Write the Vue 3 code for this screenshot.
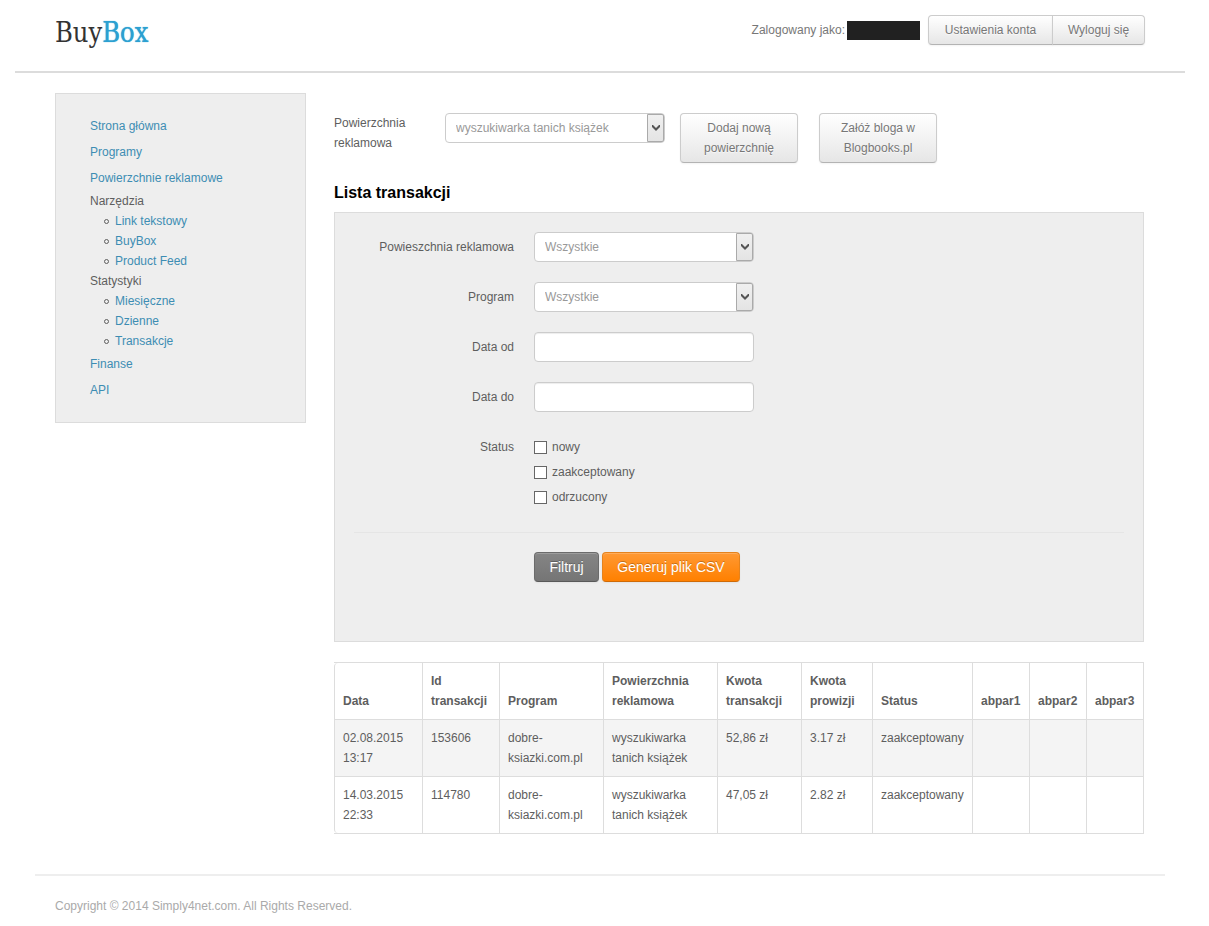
<script setup>
import { ref } from 'vue'

const menu = [
  { label: 'Strona główna' },
  { label: 'Programy' },
  { label: 'Powierzchnie reklamowe' },
  { label: 'Narzędzia', children: ['Link tekstowy', 'BuyBox', 'Product Feed'] },
  { label: 'Statystyki', children: ['Miesięczne', 'Dzienne', 'Transakcje'] },
  { label: 'Finanse' },
  { label: 'API' },
]

const statuses = ['nowy', 'zaakceptowany', 'odrzucony']

const columns = [
  { label: 'Data', cls: 'c-date' },
  { label: 'Id transakcji', cls: 'c-id' },
  { label: 'Program', cls: 'c-program' },
  { label: 'Powierzchnia reklamowa', cls: 'c-surface' },
  { label: 'Kwota transakcji', cls: 'c-amount' },
  { label: 'Kwota prowizji', cls: 'c-fee' },
  { label: 'Status', cls: 'c-status' },
  { label: 'abpar1', cls: 'c-par' },
  { label: 'abpar2', cls: 'c-par' },
  { label: 'abpar3', cls: 'c-par' },
]

const rows = [
  ['02.08.2015 13:17', '153606', 'dobre-ksiazki.com.pl', 'wyszukiwarka tanich książek', '52,86 zł', '3.17 zł', 'zaakceptowany', '', '', ''],
  ['14.03.2015 22:33', '114780', 'dobre-ksiazki.com.pl', 'wyszukiwarka tanich książek', '47,05 zł', '2.82 zł', 'zaakceptowany', '', '', ''],
]

const dateFrom = ref('')
const dateTo = ref('')
const checked = ref([])
</script>

<template>
  <div class="page">
    <header class="header">
      <a class="logo" href="#">Buy<span>Box</span></a>
      <div class="account">
        <span>Zalogowany jako:</span>
        <span class="user"></span>
        <div class="group">
          <button type="button" class="btn settings">Ustawienia konta</button>
          <button type="button" class="btn logout">Wyloguj się</button>
        </div>
      </div>
    </header>

    <div class="body">
      <nav class="sidebar">
        <ul class="menu">
          <li v-for="item in menu" :key="item.label">
            <template v-if="item.children">
              {{ item.label }}
              <ul class="submenu">
                <li v-for="child in item.children" :key="child"><a href="#">{{ child }}</a></li>
              </ul>
            </template>
            <a v-else class="top" href="#">{{ item.label }}</a>
          </li>
        </ul>
      </nav>

      <main class="main">
        <div class="toolbar">
          <label class="toolbar-label" for="surface">Powierzchnia reklamowa</label>
          <div class="select">
            <select id="surface"><option>wyszukiwarka tanich książek</option></select>
            <span class="arrow"><svg width="8" height="6" viewBox="0 0 8 6"><path d="M0 0h1l3 3 3-3h1v2L4 6 0 2z" /></svg></span>
          </div>
          <button type="button" class="btn tall">Dodaj nową powierzchnię</button>
          <button type="button" class="btn tall second">Załóż bloga w Blogbooks.pl</button>
        </div>

        <h1>Lista transakcji</h1>

        <form class="panel" @submit.prevent>
          <div class="row">
            <label for="f-surface">Powieszchnia reklamowa</label>
            <div class="select">
              <select id="f-surface"><option>Wszystkie</option></select>
              <span class="arrow"><svg width="8" height="6" viewBox="0 0 8 6"><path d="M0 0h1l3 3 3-3h1v2L4 6 0 2z" /></svg></span>
            </div>
          </div>
          <div class="row">
            <label for="f-program">Program</label>
            <div class="select">
              <select id="f-program"><option>Wszystkie</option></select>
              <span class="arrow"><svg width="8" height="6" viewBox="0 0 8 6"><path d="M0 0h1l3 3 3-3h1v2L4 6 0 2z" /></svg></span>
            </div>
          </div>
          <div class="row">
            <label for="f-from">Data od</label>
            <input id="f-from" v-model="dateFrom" class="text" type="text" />
          </div>
          <div class="row">
            <label for="f-to">Data do</label>
            <input id="f-to" v-model="dateTo" class="text" type="text" />
          </div>
          <div class="row">
            <span id="f-status" class="label">Status</span>
            <div class="checks" role="group" aria-labelledby="f-status">
              <label v-for="s in statuses" :key="s" class="check">
                <input v-model="checked" type="checkbox" :value="s" />{{ s }}
              </label>
            </div>
          </div>
          <div class="actions">
            <button type="submit" class="btn big dark">Filtruj</button>
            <button type="button" class="btn big orange">Generuj plik CSV</button>
          </div>
        </form>

        <table class="table">
          <thead>
            <tr><th v-for="c in columns" :key="c.label" :class="c.cls" scope="col">{{ c.label }}</th></tr>
          </thead>
          <tbody>
            <tr v-for="r in rows" :key="r[1]"><td v-for="(cell, i) in r" :key="i">{{ cell }}</td></tr>
          </tbody>
        </table>
      </main>
    </div>

    <footer class="footer">Copyright © 2014 Simply4net.com. All Rights Reserved.</footer>
  </div>
</template>

<style>
body {
  margin: 0;
  background: #fff;
}
</style>

<style scoped>
.page,
.page *,
.page *::before {
  box-sizing: border-box;
}
.page {
  margin: 0 24px 0 15px;
  font: 12px/20px "Liberation Sans", Arial, sans-serif;
  color: #5e5e5e;
}
a {
  color: #3d8db3;
  text-decoration: none;
}
.header {
  display: flex;
  justify-content: space-between;
  align-items: flex-start;
  height: 73px;
  padding: 15px 40px 0;
  border-bottom: 2px solid #dcdcdc;
}
.logo {
  font: 27px/36px "DejaVu Serif Condensed", "DejaVu Serif", serif;
  color: #333;
}
.logo span {
  color: #2ca0d1;
  text-shadow: 0 0 1px #2ca0d1;
}
.account {
  display: flex;
  align-items: center;
  color: #777;
}
.user {
  width: 73px;
  height: 19px;
  margin: 0 8px 0 2px;
  background: #212121;
}
.group {
  display: flex;
}
.btn {
  height: 30px;
  padding: 0 14px;
  border: 1px solid #ccc;
  border-bottom-color: #b3b3b3;
  border-radius: 4px;
  background: linear-gradient(#fff, #e6e6e6);
  box-shadow: inset 0 1px 0 rgba(255, 255, 255, 0.2), 0 1px 2px rgba(0, 0, 0, 0.05);
  font: inherit;
  color: #777;
  text-shadow: 0 1px 1px rgba(255, 255, 255, 0.75);
}
.settings {
  min-width: 125px;
  border-radius: 4px 0 0 4px;
}
.logout {
  min-width: 93px;
  margin-left: -1px;
  border-radius: 0 4px 4px 0;
}
.body {
  display: grid;
  grid-template-columns: 251px minmax(0, 1fr);
  align-items: start;
  gap: 28px;
  padding: 20px 41px 40px 40px;
}
.sidebar {
  padding: 19px 34px;
  border: 1px solid #dcdcdc;
  background: #eee;
}
.menu,
.submenu {
  margin: 0;
  padding: 0;
  list-style: none;
}
.submenu li {
  display: flex;
  align-items: center;
  gap: 6px;
  padding-left: 14px;
}
.submenu li::before {
  content: "";
  width: 5px;
  height: 5px;
  border: 1px solid #5e5e5e;
  border-radius: 50%;
}
.top {
  display: block;
  padding: 3px 0;
}
.main {
  padding-top: 20px;
}
.toolbar {
  display: flex;
  align-items: flex-start;
}
.toolbar-label {
  width: 111px;
  padding-right: 20px;
}
.select {
  position: relative;
  width: 220px;
  height: 30px;
}
.select select,
.text {
  display: block;
  width: 220px;
  height: 30px;
  padding: 0 20px 0 10px;
  border: 1px solid #ccc;
  border-radius: 4px;
  background: #fff;
  font: inherit;
  color: #999;
}
.select select {
  appearance: none;
}
.text {
  box-shadow: inset 0 1px 1px rgba(0, 0, 0, 0.075);
}
.arrow {
  position: absolute;
  top: 1px;
  right: 1px;
  bottom: 1px;
  display: flex;
  align-items: center;
  justify-content: center;
  width: 17px;
  border: 1px solid #aaa;
  border-radius: 0 2px 2px 0;
  background: linear-gradient(#f0f0f0, #e4e4e4);
  pointer-events: none;
}
.arrow path {
  fill: #555;
}
.tall {
  width: 118px;
  height: 50px;
  margin-left: 15px;
}
.second {
  margin-left: 21px;
}
h1 {
  margin: 15px 0 4px;
  font-size: 16px;
  line-height: 30px;
  color: #000;
}
.panel {
  padding: 19px 19px 59px;
  border: 1px solid #dcdcdc;
  background: #eee;
}
.row {
  display: grid;
  grid-template-columns: 160px 1fr;
  gap: 20px;
  margin-bottom: 20px;
}
.row > label,
.row > .label {
  padding-top: 5px;
  text-align: right;
}
.checks {
  display: grid;
  gap: 5px;
  justify-items: start;
  padding: 5px 0;
}
.check {
  display: flex;
  align-items: center;
  gap: 5px;
}
.check input {
  appearance: none;
  width: 13px;
  height: 13px;
  margin: 0;
  border: 1px solid #666;
  background: #fff;
}
.check input:checked {
  background: #666;
  box-shadow: inset 0 0 0 2px #fff;
}
.actions {
  display: flex;
  gap: 3px;
  padding: 19px 0 0 180px;
  border-top: 1px solid #e5e5e5;
}
.big {
  font-size: 14px;
  color: #fff;
  text-shadow: 0 -1px 0 rgba(0, 0, 0, 0.25);
}
.dark {
  min-width: 65px;
  border-color: #6b6b6b #6b6b6b #595959;
  background: linear-gradient(#858585, #757575);
}
.orange {
  min-width: 138px;
  border-color: #e5831d #e5831d #cf6a06;
  background: linear-gradient(#ff9933, #ff8000);
}
.table {
  width: 100%;
  margin-top: 20px;
  table-layout: fixed;
  border: 1px solid #ddd;
  border-left: 0;
  border-spacing: 0;
}
th,
td {
  padding: 8px;
  border-left: 1px solid #ddd;
  text-align: left;
  vertical-align: top;
}
th {
  vertical-align: bottom;
}
th:first-child {
  border-top-left-radius: 4px;
}
tbody tr:last-child td:first-child {
  border-bottom-left-radius: 4px;
}
td {
  border-top: 1px solid #ddd;
}
tbody tr:nth-child(odd) td {
  background: #f4f4f4;
}
.c-date { width: 88px; }
.c-id { width: 77px; }
.c-program { width: 104px; }
.c-surface { width: 114px; }
.c-amount { width: 84px; }
.c-fee { width: 71px; }
.c-status { width: 100px; }
.c-par { width: 57px; }
.footer {
  margin: 0 20px;
  padding: 20px 20px 10px;
  border-top: 2px solid #eee;
  color: #aaa;
}
</style>
